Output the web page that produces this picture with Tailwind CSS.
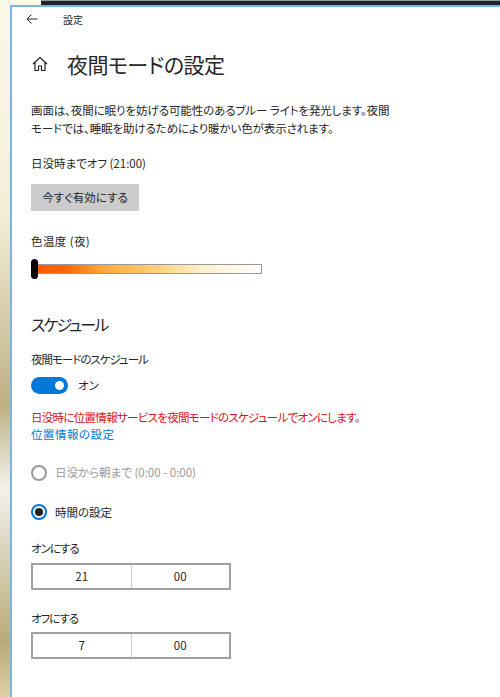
<!DOCTYPE html>
<html lang="ja">
<head>
<meta charset="UTF-8" />
<title>設定</title>
<script src="https://cdn.jsdelivr.net/npm/@tailwindcss/browser@4"></script>
</head>
<body class="h-[697px] w-[500px] overflow-hidden bg-[linear-gradient(to_bottom,#fbf8e8_0%,#f5efd8_30%,#bdb183_58%,#f3f1ea_70%,#b8aa78_92%,#dccfa5_100%)] font-['Noto_Sans_CJK_JP','Liberation_Sans',sans-serif] text-[#262626] [font-feature-settings:'palt']">
<div class="ml-[41px] h-[5px] border-t border-[#9a9a9a] bg-[#1c2430]"></div>
<div class="ml-[10px] h-[692px] border-t-2 border-l-2 border-[#78b4e4] bg-white pl-[19px]">
  <!-- title bar -->
  <div class="flex h-[24px] items-center">
    <svg class="ml-[-5px] h-[12px] w-[12px]" viewBox="0 0 12 12" fill="none" stroke="#222" stroke-width="1"><path d="M11.5 6H1M5.5 1.5 1 6l4.5 4.5"/></svg>
    <span class="ml-[25px] text-[10px]">設定</span>
  </div>
  <!-- page header -->
  <div class="mt-[13px] flex h-[40px] items-center">
    <svg class="ml-[1px] h-[16px] w-[16px]" viewBox="0 0 16 16" fill="none" stroke="#222" stroke-width="1.2"><path d="M1 8 8 1.5 15 8M3 6.5V14.5H6.5V10H9.5V14.5H13V6.5"/></svg>
    <h1 class="ml-[19px] text-[21px] leading-none tracking-[-0.5px]">夜間モードの設定</h1>
  </div>
  <p class="mt-[17px] w-[445px] text-[11.5px] leading-[18px] tracking-[-0.1px]">画面は、夜間に眠りを妨げる可能性のあるブルー ライトを発光します。夜間<br>モードでは、睡眠を助けるためにより暖かい色が表示されます。</p>
  <p class="mt-[17px] text-[11.5px] leading-[18px]">日没時までオフ (21:00)</p>
  <button class="mt-[12px] block h-[27px] w-[108px] bg-[#cccccc] text-[11.5px]">今すぐ有効にする</button>
  <p class="mt-[21px] text-[11.5px] leading-[18px] tracking-[0.4px]">色温度 (夜)</p>
  <!-- slider -->
  <div class="relative mt-[14px] h-[10px] w-[231px] border border-[#999] bg-[linear-gradient(to_right,#ff5500_0%,#ff6600_15%,#ffa733_30%,#ffd27f_55%,#fff0d0_75%,#ffffff_100%)]">
    <div class="absolute left-[-1px] top-[-6px] h-[20px] w-[7px] rounded-full bg-black"></div>
  </div>
  <h2 class="mt-[38px] text-[16px] leading-[24px] tracking-[-2px]">スケジュール</h2>
  <p class="mt-[14px] text-[11.5px] leading-[18px] tracking-[-1px]">夜間モードのスケジュール</p>
  <div class="mt-[9px] flex items-center">
    <div class="flex h-[17px] w-[37px] items-center justify-end rounded-full bg-[#0078d7] pr-[4px]"><div class="h-[9px] w-[9px] rounded-full bg-white"></div></div>
    <span class="ml-[10px] text-[11.5px]">オン</span>
  </div>
  <p class="mt-[14px] text-[11.5px] leading-[18px] tracking-[-0.7px] text-[#e00f20]">日没時に位置情報サービスを夜間モードのスケジュールでオンにします。</p>
  <a class="block text-[11.5px] leading-[17px] tracking-[0.5px] text-[#0078d7]">位置情報の設定</a>
  <div class="mt-[21px] flex items-center">
    <div class="h-[16px] w-[16px] rounded-full border-2 border-[#999]"></div>
    <span class="ml-[8px] text-[11.5px] text-[#999]">日没から朝まで (0:00 - 0:00)</span>
  </div>
  <div class="mt-[22px] flex items-center">
    <div class="flex h-[16px] w-[16px] items-center justify-center rounded-full border-2 border-[#0078d7]"><div class="h-[8px] w-[8px] rounded-full bg-[#222]"></div></div>
    <span class="ml-[8px] text-[11.5px]">時間の設定</span>
  </div>
  <p class="mt-[18px] text-[11.5px] leading-[18px] tracking-[-1px]">オンにする</p>
  <div class="mt-[6px] flex h-[27px] w-[200px] items-center border-2 border-[#a0a0a0] text-[11.5px]">
    <span class="flex-1 text-center">21</span>
    <span class="flex h-full flex-1 items-center justify-center border-l border-[#ccc]">00</span>
  </div>
  <p class="mt-[19px] text-[11.5px] leading-[18px] tracking-[-1px]">オフにする</p>
  <div class="mt-[5px] flex h-[27px] w-[200px] items-center border-2 border-[#a0a0a0] text-[11.5px]">
    <span class="flex-1 text-center">7</span>
    <span class="flex h-full flex-1 items-center justify-center border-l border-[#ccc]">00</span>
  </div>
</div>
</body>
</html>
